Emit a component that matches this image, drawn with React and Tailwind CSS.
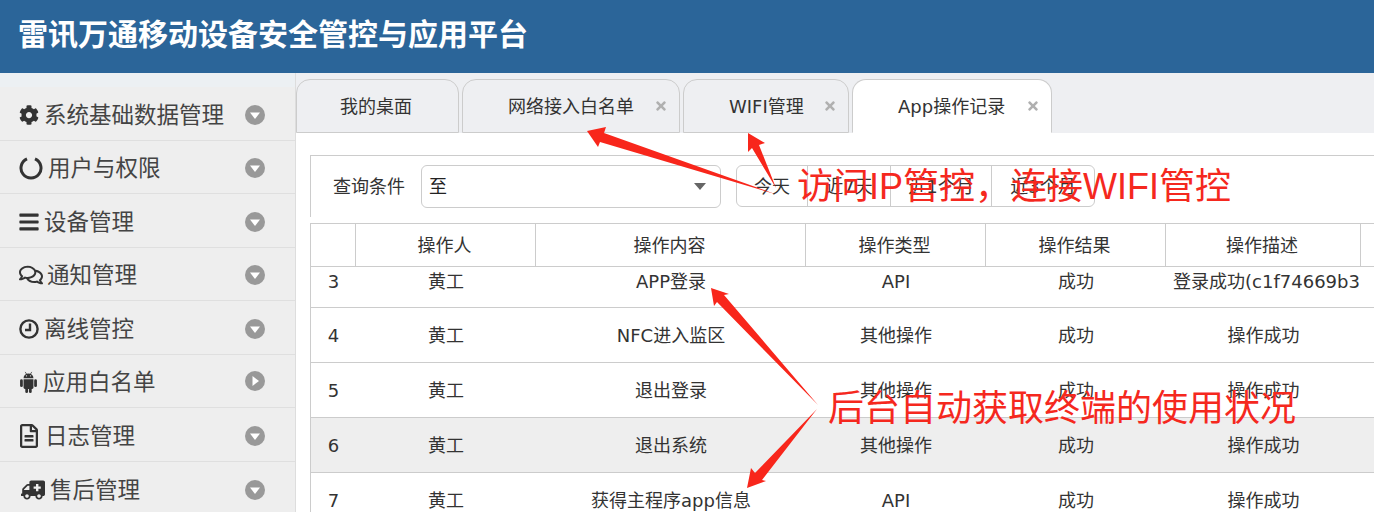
import {
  FaCog,
  FaBars,
  FaRegComments,
  FaRegFileAlt,
  FaAmbulance,
  FaTimes,
} from 'react-icons/fa';

const uiFont = "font-['DejaVu_Sans','Noto_Sans_CJK_SC',sans-serif]";

function NotchIcon({ className }) {
  return (
    <svg viewBox="0 0 24 24" className={className} fill="none" stroke="currentColor" strokeWidth="3">
      <path d="M8 2.83a10 10 0 1 0 8 0" />
    </svg>
  );
}

function ClockIcon({ className }) {
  return (
    <svg viewBox="0 0 20 20" className={className} fill="none" stroke="currentColor" strokeWidth="2.4">
      <circle cx="10" cy="10" r="8.6" />
      <path d="M11 4.5V11H6" />
    </svg>
  );
}

function AndroidIcon({ className }) {
  return (
    <svg viewBox="0 0 20 24" className={className} fill="currentColor">
      <path d="M4.6 8a5.4 5.4 0 0 1 10.8 0z" />
      <path d="M6.4 1l1.6 2.6M13.6 1 12 3.6" stroke="currentColor" strokeWidth="0.8" />
      <path d="M4.6 9h10.8v9a1.5 1.5 0 0 1-1.5 1.5H6.100a1.500 1.500 0 0 1-1.500-1.500z" />
      <rect x="0.800" y="9" width="3" height="8.500" rx="1.500" />
      <rect x="16.200" y="9" width="3" height="8.500" rx="1.500" />
      <rect x="6.500" y="18" width="3" height="6" rx="1.500" />
      <rect x="10.500" y="18" width="3" height="6" rx="1.500" />
      <circle cx="7.800" cy="5.300" r="0.700" fill="#eeeeee" />
      <circle cx="12.200" cy="5.300" r="0.700" fill="#eeeeee" />
    </svg>
  );
}

const menu = [
  { label: '系统基础数据管理', Icon: FaCog, icon: 'w-[20px] h-[20px]', gap: 'ml-[5px]' },
  { label: '用户与权限', Icon: NotchIcon, icon: 'w-[24px] h-[24px]', gap: 'ml-[5px]' },
  { label: '设备管理', Icon: FaBars, icon: 'w-[20px] h-[22px]', gap: 'ml-[5px]' },
  { label: '通知管理', Icon: FaRegComments, icon: 'w-[24px] h-[22px]', gap: 'ml-[4px]' },
  { label: '离线管控', Icon: ClockIcon, icon: 'w-[20px] h-[20px]', gap: 'ml-[5px]' },
  { label: '应用白名单', Icon: AndroidIcon, icon: 'w-[19px] h-[22px]', gap: 'ml-[5px]', open: true },
  { label: '日志管理', Icon: FaRegFileAlt, icon: 'w-[20px] h-[24px]', gap: 'ml-[6px]' },
  { label: '售后管理', Icon: FaAmbulance, icon: 'w-[24px] h-[22px] ml-[2px] -scale-x-100', gap: 'ml-[5px]' },
];

const tabs = [
  { label: '我的桌面', width: 'w-[163px]', text: 'ml-[43px]' },
  { label: '网络接入白名单', width: 'w-[218px]', text: 'ml-[45px]', close: true },
  { label: 'WIFI管理', width: 'w-[166px]', text: 'ml-[45px]', close: true },
  { label: 'App操作记录', width: 'w-[200px]', text: 'ml-[45px]', close: true, active: true },
];

const columns = [
  'w-[45px]',
  'w-[180px]',
  'w-[270px]',
  'w-[180px]',
  'w-[180px]',
  'w-[195px]',
];

const headers = ['', '操作人', '操作内容', '操作类型', '操作结果', '操作描述'];

const rows = [
  ['3', '黄工', 'APP登录', 'API', '成功', '登录成功(c1f74669b3'],
  ['4', '黄工', 'NFC进入监区', '其他操作', '成功', '操作成功'],
  ['5', '黄工', '退出登录', '其他操作', '成功', '操作成功'],
  ['6', '黄工', '退出系统', '其他操作', '成功', '操作成功'],
  ['7', '黄工', '获得主程序app信息', 'API', '成功', '操作成功'],
];

function Sidebar() {
  return (
    <aside className="w-[296px] shrink-0 bg-[#eeeeee] border-r border-[#dddddd]">
      <div className="h-[14px] bg-[#ecf0f3]" />
      {menu.map(({ label, Icon, icon, gap, open }, i) => (
        <div
          key={label}
          className={`relative flex items-center h-[53.5px] pt-[3px] pl-[19px] text-[22.5px] text-[#444444] ${i < 7 ? 'border-b border-[#dfdfdf]' : ''}`}
        >
          <Icon className={`${icon} shrink-0 text-[#333333]`} />
          <span className={`${gap} whitespace-nowrap leading-none`}>{label}</span>
          <span className={`absolute left-[245px] flex w-[20px] h-[20px] items-center justify-center rounded-full bg-[#999999] ${open ? '-mt-[3px]' : ''}`}>
            <svg viewBox="0 0 12 12" className="w-[12px] h-[12px] text-white" fill="currentColor">
              {open ? <path d="M3.5 1 10 6l-6.5 5z" /> : <path d="M1 3.5h10L6 10z" />}
            </svg>
          </span>
        </div>
      ))}
    </aside>
  );
}

function Tabs() {
  return (
    <div className="flex h-[60px] items-end gap-[3px] bg-[#eeeff2]">
      {tabs.map(({ label, width, text, close, active }) => (
        <div
          key={label}
          className={`relative flex items-center h-[54px] ${width} rounded-t-[14px] border border-[#cccccc] text-[18px] text-[#333333] ${active ? 'bg-white border-b-white' : 'bg-[#eeeff2]'}`}
        >
          <span className={`${text} whitespace-nowrap`}>{label}</span>
          {close && <FaTimes className="absolute right-[11px] w-[14px] h-[14px] text-[#b0b0b0]" />}
        </div>
      ))}
    </div>
  );
}

function Filter() {
  return (
    <div className="flex items-start h-[62px] border-l border-t border-[#cccccc]">
      <span className="ml-[22px] mt-[17px] whitespace-nowrap text-[18px] leading-[27px] text-[#333333]">查询条件</span>
      <div className="ml-[16px] mt-[9px] flex items-center justify-between w-[300px] h-[43px] rounded-[6px] border border-[#cccccc] pl-[7px] pr-[14px] text-[18px] text-[#222222]">
        至
        <span className="w-0 h-0 border-x-[6px] border-t-[7px] border-x-transparent border-t-[#666666]" />
      </div>
      <div className="ml-[15px] mt-[9px] flex w-[359px] h-[42px] rounded-[6px] border border-[#cccccc] text-[18px] text-[#333333]">
        <span className="flex w-[71px] items-center justify-center border-r border-[#cccccc]">今天</span>
        <span className="flex w-[83px] items-center justify-center border-r border-[#cccccc]">近7天</span>
        <span className="flex w-[101px] items-center justify-center border-r border-[#cccccc]">近1个月</span>
        <span className="flex flex-1 items-center justify-center">近3个月</span>
      </div>
    </div>
  );
}

function Table() {
  return (
    <div className="mt-[6px] w-[1100px] text-[18px] text-[#333333]">
      <div className="flex h-[44px] border-y border-l border-[#cccccc]">
        {headers.map((h, i) => (
          <div key={i} className={`${columns[i]} flex items-center justify-center border-r border-[#cccccc] pr-[2px] whitespace-nowrap`}>
            {h}
          </div>
        ))}
      </div>
      {rows.map((row, r) => (
        <div
          key={row[0]}
          className={`flex border-b border-l border-[#cccccc] ${r === 0 ? 'h-[41px] pb-[12px]' : 'h-[55px]'} ${r === 3 ? 'bg-[#eeeeee]' : 'bg-white'}`}
        >
          {row.map((cell, i) => (
            <div key={i} className={`${columns[i]} shrink-0 flex items-center justify-center whitespace-nowrap ${r === 0 && i === 5 ? 'pl-[6px]' : ''}`}>
              {cell}
            </div>
          ))}
        </div>
      ))}
    </div>
  );
}

function Annotations() {
  return (
    <>
      <svg className="absolute left-0 top-0 w-[1374px] h-[512px] pointer-events-none" viewBox="0 0 1374 512" fill="#f8261b">
        <polygon points="587,131 606,127 604,133 775,194 600,142 598,147" />
        <polygon points="748,133 765,143 759,145 776,188 752,148 748,152" />
        <polygon points="711,288 729,294 724,295 818,405 717,302 714,306" />
        <polygon points="747,488 751,468 755,473 817,409 762,480 766,481" />
      </svg>
      <span className="absolute left-[797px] top-[162px] text-[36px] leading-[50px] whitespace-nowrap text-[#f5281e] font-['Liberation_Sans','Noto_Sans_CJK_SC',sans-serif]">
        访问IP管控，连接WIFI管控
      </span>
      <span className="absolute left-[828px] top-[384px] text-[36px] leading-[50px] whitespace-nowrap text-[#f5281e] font-['Liberation_Sans','Noto_Sans_CJK_SC',sans-serif]">
        后台自动获取终端的使用状况
      </span>
    </>
  );
}

export default function App() {
  return (
    <div className={`relative w-[1374px] h-[512px] overflow-hidden bg-white ${uiFont}`}>
      <header className="flex items-center h-[73px] pl-[18px] bg-[#2b6599] text-white text-[30px] font-bold">
        <span className="-mt-[9px] whitespace-nowrap font-['Noto_Sans_CJK_SC',sans-serif]">雷讯万通移动设备安全管控与应用平台</span>
      </header>
      <div className="flex h-[439px]">
        <Sidebar />
        <main className="flex-1 min-w-0 overflow-hidden">
          <Tabs />
          <div className="pl-[14px] pt-[22px]">
            <Filter />
            <Table />
          </div>
        </main>
      </div>
      <Annotations />
    </div>
  );
}
